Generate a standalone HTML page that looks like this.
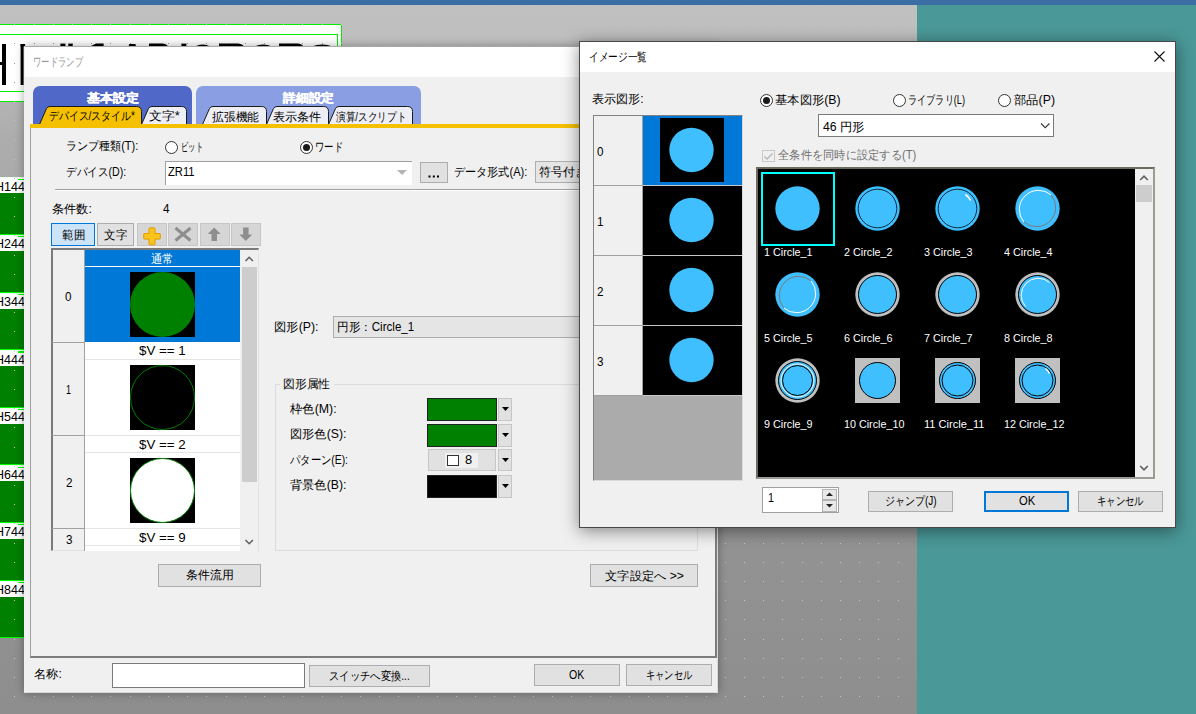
<!DOCTYPE html>
<html><head><meta charset="utf-8">
<style>
html,body{margin:0;padding:0}
body{width:1196px;height:714px;overflow:hidden;position:relative;font-family:"Liberation Sans",sans-serif;font-size:12px;color:#000;background:#8e8e8e}
.a{position:absolute;box-sizing:border-box}
.t{position:absolute;white-space:nowrap;transform-origin:0 50%}
svg{position:absolute;overflow:visible}
</style></head><body>

<div class="a" style="left:0px;top:0px;width:1196px;height:5px;background:#3b6ea5"></div>
<div class="a" style="left:0px;top:5px;width:917px;height:709px;background:linear-gradient(#c0c0c0 0px,#bebebe 40px,#adadad 130px,#939393 520px,#8e8e8e 709px)"></div>
<div class="a" style="left:917px;top:5px;width:279px;height:709px;background:#4a9898"></div>
<div class="a" style="left:-10px;top:24px;width:352px;height:78px;background:#fff;border:1px solid #00f000"></div>
<div class="a" style="left:-10px;top:34px;width:348px;height:58px;border:1px solid #00f000"></div>
<svg style="left:0;top:0" width="345" height="100">
<rect x="2" y="44" width="4" height="41" fill="#000"/><rect x="0" y="62" width="3" height="3" fill="#000"/>
<rect x="20.6" y="44" width="3" height="41" fill="#000"/><rect x="20.6" y="44" width="4.5" height="2.5" fill="#000"/>
<rect x="60.4" y="43.6" width="5" height="3" fill="#000"/><rect x="68.3" y="43.6" width="4.4" height="3" fill="#000"/>
<path d="M90,46.5 L96,43.6 L103.6,43.6 L103.6,46.5 Z" fill="#000"/>
<rect x="128.8" y="44" width="7" height="2.6" rx="1" fill="#000"/>
<path d="M149,46.5 L149,43.6 L163,43.6 Q167.6,44.5 167.6,46.5 Z" fill="#000"/>
<rect x="181.4" y="43.6" width="5" height="3" fill="#000"/>
<path d="M195,46.5 Q202.7,42.5 210.4,46.5 Z M219,46.5 L219,43.6 L238,43.6 Q243.6,44.5 243.6,46.5 Z M254.5,46.5 Q263.2,42.5 271.9,46.5 Z M279,46.5 L279,43.6 L298,43.6 Q303,44.5 303,46.5 Z M311.7,46.5 Q322,42.5 332.6,46.5 Z" fill="#000"/>
</svg>
<div class="a" style="left:0px;top:177.4px;width:24px;height:57.6px;background:#008000;border-bottom:1px solid #00ff00"></div>
<div class="a" style="left:0px;top:177.4px;width:24px;height:16px;background:#fff;border-top:1px solid #e8ffe8"></div>
<div class="a" style="left:18px;top:178.6px;width:6px;height:1.3px;background:#00ff00"></div>
<div class="t" style="left:-5px;top:179.8px;font-size:12.5px;line-height:14px;">H144</div>
<div class="a" style="left:0px;top:235.0px;width:24px;height:57.6px;background:#008000;border-bottom:1px solid #00ff00"></div>
<div class="a" style="left:0px;top:235.0px;width:24px;height:16px;background:#fff;border-top:1px solid #e8ffe8"></div>
<div class="a" style="left:18px;top:236.2px;width:6px;height:1.3px;background:#00ff00"></div>
<div class="t" style="left:-5px;top:237.4px;font-size:12.5px;line-height:14px;">H244</div>
<div class="a" style="left:0px;top:292.6px;width:24px;height:57.6px;background:#008000;border-bottom:1px solid #00ff00"></div>
<div class="a" style="left:0px;top:292.6px;width:24px;height:16px;background:#fff;border-top:1px solid #e8ffe8"></div>
<div class="a" style="left:18px;top:293.8px;width:6px;height:1.3px;background:#00ff00"></div>
<div class="t" style="left:-5px;top:295.0px;font-size:12.5px;line-height:14px;">H344</div>
<div class="a" style="left:0px;top:350.2px;width:24px;height:57.6px;background:#008000;border-bottom:1px solid #00ff00"></div>
<div class="a" style="left:0px;top:350.2px;width:24px;height:16px;background:#fff;border-top:1px solid #e8ffe8"></div>
<div class="a" style="left:18px;top:351.4px;width:6px;height:1.3px;background:#00ff00"></div>
<div class="t" style="left:-5px;top:352.6px;font-size:12.5px;line-height:14px;">H444</div>
<div class="a" style="left:0px;top:407.8px;width:24px;height:57.6px;background:#008000;border-bottom:1px solid #00ff00"></div>
<div class="a" style="left:0px;top:407.8px;width:24px;height:16px;background:#fff;border-top:1px solid #e8ffe8"></div>
<div class="a" style="left:18px;top:409.0px;width:6px;height:1.3px;background:#00ff00"></div>
<div class="t" style="left:-5px;top:410.2px;font-size:12.5px;line-height:14px;">H544</div>
<div class="a" style="left:0px;top:465.4px;width:24px;height:57.6px;background:#008000;border-bottom:1px solid #00ff00"></div>
<div class="a" style="left:0px;top:465.4px;width:24px;height:16px;background:#fff;border-top:1px solid #e8ffe8"></div>
<div class="a" style="left:18px;top:466.6px;width:6px;height:1.3px;background:#00ff00"></div>
<div class="t" style="left:-5px;top:467.8px;font-size:12.5px;line-height:14px;">H644</div>
<div class="a" style="left:0px;top:523.0px;width:24px;height:57.6px;background:#008000;border-bottom:1px solid #00ff00"></div>
<div class="a" style="left:0px;top:523.0px;width:24px;height:16px;background:#fff;border-top:1px solid #e8ffe8"></div>
<div class="a" style="left:18px;top:524.2px;width:6px;height:1.3px;background:#00ff00"></div>
<div class="t" style="left:-5px;top:525.4px;font-size:12.5px;line-height:14px;">H744</div>
<div class="a" style="left:0px;top:580.6px;width:24px;height:57.6px;background:#008000;border-bottom:1px solid #00ff00"></div>
<div class="a" style="left:0px;top:580.6px;width:24px;height:16px;background:#fff;border-top:1px solid #e8ffe8"></div>
<div class="a" style="left:18px;top:581.8px;width:6px;height:1.3px;background:#00ff00"></div>
<div class="t" style="left:-5px;top:583.0px;font-size:12.5px;line-height:14px;">H844</div>
<svg style="left:0;top:0" width="917" height="714"><path d="M14,5h1v1h-1zM34,5h1v1h-1zM53,5h1v1h-1zM72,5h1v1h-1zM91,5h1v1h-1zM110,5h1v1h-1zM130,5h1v1h-1zM149,5h1v1h-1zM168,5h1v1h-1zM187,5h1v1h-1zM206,5h1v1h-1zM226,5h1v1h-1zM245,5h1v1h-1zM264,5h1v1h-1zM283,5h1v1h-1zM302,5h1v1h-1zM322,5h1v1h-1zM341,5h1v1h-1zM360,5h1v1h-1zM379,5h1v1h-1zM398,5h1v1h-1zM418,5h1v1h-1zM437,5h1v1h-1zM456,5h1v1h-1zM475,5h1v1h-1zM494,5h1v1h-1zM514,5h1v1h-1zM533,5h1v1h-1zM552,5h1v1h-1zM571,5h1v1h-1zM590,5h1v1h-1zM610,5h1v1h-1zM629,5h1v1h-1zM648,5h1v1h-1zM667,5h1v1h-1zM686,5h1v1h-1zM706,5h1v1h-1zM725,5h1v1h-1zM744,5h1v1h-1zM763,5h1v1h-1zM782,5h1v1h-1zM802,5h1v1h-1zM821,5h1v1h-1zM840,5h1v1h-1zM859,5h1v1h-1zM878,5h1v1h-1zM898,5h1v1h-1zM14,24h1v1h-1zM34,24h1v1h-1zM53,24h1v1h-1zM72,24h1v1h-1zM91,24h1v1h-1zM110,24h1v1h-1zM130,24h1v1h-1zM149,24h1v1h-1zM168,24h1v1h-1zM187,24h1v1h-1zM206,24h1v1h-1zM226,24h1v1h-1zM245,24h1v1h-1zM264,24h1v1h-1zM283,24h1v1h-1zM302,24h1v1h-1zM322,24h1v1h-1zM341,24h1v1h-1zM360,24h1v1h-1zM379,24h1v1h-1zM398,24h1v1h-1zM418,24h1v1h-1zM437,24h1v1h-1zM456,24h1v1h-1zM475,24h1v1h-1zM494,24h1v1h-1zM514,24h1v1h-1zM533,24h1v1h-1zM552,24h1v1h-1zM571,24h1v1h-1zM590,24h1v1h-1zM610,24h1v1h-1zM629,24h1v1h-1zM648,24h1v1h-1zM667,24h1v1h-1zM686,24h1v1h-1zM706,24h1v1h-1zM725,24h1v1h-1zM744,24h1v1h-1zM763,24h1v1h-1zM782,24h1v1h-1zM802,24h1v1h-1zM821,24h1v1h-1zM840,24h1v1h-1zM859,24h1v1h-1zM878,24h1v1h-1zM898,24h1v1h-1zM341,43h1v1h-1zM360,43h1v1h-1zM379,43h1v1h-1zM398,43h1v1h-1zM418,43h1v1h-1zM437,43h1v1h-1zM456,43h1v1h-1zM475,43h1v1h-1zM494,43h1v1h-1zM514,43h1v1h-1zM533,43h1v1h-1zM552,43h1v1h-1zM571,43h1v1h-1zM590,43h1v1h-1zM610,43h1v1h-1zM629,43h1v1h-1zM648,43h1v1h-1zM667,43h1v1h-1zM686,43h1v1h-1zM706,43h1v1h-1zM725,43h1v1h-1zM744,43h1v1h-1zM763,43h1v1h-1zM782,43h1v1h-1zM802,43h1v1h-1zM821,43h1v1h-1zM840,43h1v1h-1zM859,43h1v1h-1zM878,43h1v1h-1zM898,43h1v1h-1zM341,63h1v1h-1zM360,63h1v1h-1zM379,63h1v1h-1zM398,63h1v1h-1zM418,63h1v1h-1zM437,63h1v1h-1zM456,63h1v1h-1zM475,63h1v1h-1zM494,63h1v1h-1zM514,63h1v1h-1zM533,63h1v1h-1zM552,63h1v1h-1zM571,63h1v1h-1zM590,63h1v1h-1zM610,63h1v1h-1zM629,63h1v1h-1zM648,63h1v1h-1zM667,63h1v1h-1zM686,63h1v1h-1zM706,63h1v1h-1zM725,63h1v1h-1zM744,63h1v1h-1zM763,63h1v1h-1zM782,63h1v1h-1zM802,63h1v1h-1zM821,63h1v1h-1zM840,63h1v1h-1zM859,63h1v1h-1zM878,63h1v1h-1zM898,63h1v1h-1zM341,82h1v1h-1zM360,82h1v1h-1zM379,82h1v1h-1zM398,82h1v1h-1zM418,82h1v1h-1zM437,82h1v1h-1zM456,82h1v1h-1zM475,82h1v1h-1zM494,82h1v1h-1zM514,82h1v1h-1zM533,82h1v1h-1zM552,82h1v1h-1zM571,82h1v1h-1zM590,82h1v1h-1zM610,82h1v1h-1zM629,82h1v1h-1zM648,82h1v1h-1zM667,82h1v1h-1zM686,82h1v1h-1zM706,82h1v1h-1zM725,82h1v1h-1zM744,82h1v1h-1zM763,82h1v1h-1zM782,82h1v1h-1zM802,82h1v1h-1zM821,82h1v1h-1zM840,82h1v1h-1zM859,82h1v1h-1zM878,82h1v1h-1zM898,82h1v1h-1zM14,101h1v1h-1zM34,101h1v1h-1zM53,101h1v1h-1zM72,101h1v1h-1zM91,101h1v1h-1zM110,101h1v1h-1zM130,101h1v1h-1zM149,101h1v1h-1zM168,101h1v1h-1zM187,101h1v1h-1zM206,101h1v1h-1zM226,101h1v1h-1zM245,101h1v1h-1zM264,101h1v1h-1zM283,101h1v1h-1zM302,101h1v1h-1zM322,101h1v1h-1zM341,101h1v1h-1zM360,101h1v1h-1zM379,101h1v1h-1zM398,101h1v1h-1zM418,101h1v1h-1zM437,101h1v1h-1zM456,101h1v1h-1zM475,101h1v1h-1zM494,101h1v1h-1zM514,101h1v1h-1zM533,101h1v1h-1zM552,101h1v1h-1zM571,101h1v1h-1zM590,101h1v1h-1zM610,101h1v1h-1zM629,101h1v1h-1zM648,101h1v1h-1zM667,101h1v1h-1zM686,101h1v1h-1zM706,101h1v1h-1zM725,101h1v1h-1zM744,101h1v1h-1zM763,101h1v1h-1zM782,101h1v1h-1zM802,101h1v1h-1zM821,101h1v1h-1zM840,101h1v1h-1zM859,101h1v1h-1zM878,101h1v1h-1zM898,101h1v1h-1zM14,120h1v1h-1zM34,120h1v1h-1zM53,120h1v1h-1zM72,120h1v1h-1zM91,120h1v1h-1zM110,120h1v1h-1zM130,120h1v1h-1zM149,120h1v1h-1zM168,120h1v1h-1zM187,120h1v1h-1zM206,120h1v1h-1zM226,120h1v1h-1zM245,120h1v1h-1zM264,120h1v1h-1zM283,120h1v1h-1zM302,120h1v1h-1zM322,120h1v1h-1zM341,120h1v1h-1zM360,120h1v1h-1zM379,120h1v1h-1zM398,120h1v1h-1zM418,120h1v1h-1zM437,120h1v1h-1zM456,120h1v1h-1zM475,120h1v1h-1zM494,120h1v1h-1zM514,120h1v1h-1zM533,120h1v1h-1zM552,120h1v1h-1zM571,120h1v1h-1zM590,120h1v1h-1zM610,120h1v1h-1zM629,120h1v1h-1zM648,120h1v1h-1zM667,120h1v1h-1zM686,120h1v1h-1zM706,120h1v1h-1zM725,120h1v1h-1zM744,120h1v1h-1zM763,120h1v1h-1zM782,120h1v1h-1zM802,120h1v1h-1zM821,120h1v1h-1zM840,120h1v1h-1zM859,120h1v1h-1zM878,120h1v1h-1zM898,120h1v1h-1zM14,139h1v1h-1zM34,139h1v1h-1zM53,139h1v1h-1zM72,139h1v1h-1zM91,139h1v1h-1zM110,139h1v1h-1zM130,139h1v1h-1zM149,139h1v1h-1zM168,139h1v1h-1zM187,139h1v1h-1zM206,139h1v1h-1zM226,139h1v1h-1zM245,139h1v1h-1zM264,139h1v1h-1zM283,139h1v1h-1zM302,139h1v1h-1zM322,139h1v1h-1zM341,139h1v1h-1zM360,139h1v1h-1zM379,139h1v1h-1zM398,139h1v1h-1zM418,139h1v1h-1zM437,139h1v1h-1zM456,139h1v1h-1zM475,139h1v1h-1zM494,139h1v1h-1zM514,139h1v1h-1zM533,139h1v1h-1zM552,139h1v1h-1zM571,139h1v1h-1zM590,139h1v1h-1zM610,139h1v1h-1zM629,139h1v1h-1zM648,139h1v1h-1zM667,139h1v1h-1zM686,139h1v1h-1zM706,139h1v1h-1zM725,139h1v1h-1zM744,139h1v1h-1zM763,139h1v1h-1zM782,139h1v1h-1zM802,139h1v1h-1zM821,139h1v1h-1zM840,139h1v1h-1zM859,139h1v1h-1zM878,139h1v1h-1zM898,139h1v1h-1zM14,159h1v1h-1zM34,159h1v1h-1zM53,159h1v1h-1zM72,159h1v1h-1zM91,159h1v1h-1zM110,159h1v1h-1zM130,159h1v1h-1zM149,159h1v1h-1zM168,159h1v1h-1zM187,159h1v1h-1zM206,159h1v1h-1zM226,159h1v1h-1zM245,159h1v1h-1zM264,159h1v1h-1zM283,159h1v1h-1zM302,159h1v1h-1zM322,159h1v1h-1zM341,159h1v1h-1zM360,159h1v1h-1zM379,159h1v1h-1zM398,159h1v1h-1zM418,159h1v1h-1zM437,159h1v1h-1zM456,159h1v1h-1zM475,159h1v1h-1zM494,159h1v1h-1zM514,159h1v1h-1zM533,159h1v1h-1zM552,159h1v1h-1zM571,159h1v1h-1zM590,159h1v1h-1zM610,159h1v1h-1zM629,159h1v1h-1zM648,159h1v1h-1zM667,159h1v1h-1zM686,159h1v1h-1zM706,159h1v1h-1zM725,159h1v1h-1zM744,159h1v1h-1zM763,159h1v1h-1zM782,159h1v1h-1zM802,159h1v1h-1zM821,159h1v1h-1zM840,159h1v1h-1zM859,159h1v1h-1zM878,159h1v1h-1zM898,159h1v1h-1zM14,178h1v1h-1zM34,178h1v1h-1zM53,178h1v1h-1zM72,178h1v1h-1zM91,178h1v1h-1zM110,178h1v1h-1zM130,178h1v1h-1zM149,178h1v1h-1zM168,178h1v1h-1zM187,178h1v1h-1zM206,178h1v1h-1zM226,178h1v1h-1zM245,178h1v1h-1zM264,178h1v1h-1zM283,178h1v1h-1zM302,178h1v1h-1zM322,178h1v1h-1zM341,178h1v1h-1zM360,178h1v1h-1zM379,178h1v1h-1zM398,178h1v1h-1zM418,178h1v1h-1zM437,178h1v1h-1zM456,178h1v1h-1zM475,178h1v1h-1zM494,178h1v1h-1zM514,178h1v1h-1zM533,178h1v1h-1zM552,178h1v1h-1zM571,178h1v1h-1zM590,178h1v1h-1zM610,178h1v1h-1zM629,178h1v1h-1zM648,178h1v1h-1zM667,178h1v1h-1zM686,178h1v1h-1zM706,178h1v1h-1zM725,178h1v1h-1zM744,178h1v1h-1zM763,178h1v1h-1zM782,178h1v1h-1zM802,178h1v1h-1zM821,178h1v1h-1zM840,178h1v1h-1zM859,178h1v1h-1zM878,178h1v1h-1zM898,178h1v1h-1zM14,197h1v1h-1zM34,197h1v1h-1zM53,197h1v1h-1zM72,197h1v1h-1zM91,197h1v1h-1zM110,197h1v1h-1zM130,197h1v1h-1zM149,197h1v1h-1zM168,197h1v1h-1zM187,197h1v1h-1zM206,197h1v1h-1zM226,197h1v1h-1zM245,197h1v1h-1zM264,197h1v1h-1zM283,197h1v1h-1zM302,197h1v1h-1zM322,197h1v1h-1zM341,197h1v1h-1zM360,197h1v1h-1zM379,197h1v1h-1zM398,197h1v1h-1zM418,197h1v1h-1zM437,197h1v1h-1zM456,197h1v1h-1zM475,197h1v1h-1zM494,197h1v1h-1zM514,197h1v1h-1zM533,197h1v1h-1zM552,197h1v1h-1zM571,197h1v1h-1zM590,197h1v1h-1zM610,197h1v1h-1zM629,197h1v1h-1zM648,197h1v1h-1zM667,197h1v1h-1zM686,197h1v1h-1zM706,197h1v1h-1zM725,197h1v1h-1zM744,197h1v1h-1zM763,197h1v1h-1zM782,197h1v1h-1zM802,197h1v1h-1zM821,197h1v1h-1zM840,197h1v1h-1zM859,197h1v1h-1zM878,197h1v1h-1zM898,197h1v1h-1zM14,216h1v1h-1zM34,216h1v1h-1zM53,216h1v1h-1zM72,216h1v1h-1zM91,216h1v1h-1zM110,216h1v1h-1zM130,216h1v1h-1zM149,216h1v1h-1zM168,216h1v1h-1zM187,216h1v1h-1zM206,216h1v1h-1zM226,216h1v1h-1zM245,216h1v1h-1zM264,216h1v1h-1zM283,216h1v1h-1zM302,216h1v1h-1zM322,216h1v1h-1zM341,216h1v1h-1zM360,216h1v1h-1zM379,216h1v1h-1zM398,216h1v1h-1zM418,216h1v1h-1zM437,216h1v1h-1zM456,216h1v1h-1zM475,216h1v1h-1zM494,216h1v1h-1zM514,216h1v1h-1zM533,216h1v1h-1zM552,216h1v1h-1zM571,216h1v1h-1zM590,216h1v1h-1zM610,216h1v1h-1zM629,216h1v1h-1zM648,216h1v1h-1zM667,216h1v1h-1zM686,216h1v1h-1zM706,216h1v1h-1zM725,216h1v1h-1zM744,216h1v1h-1zM763,216h1v1h-1zM782,216h1v1h-1zM802,216h1v1h-1zM821,216h1v1h-1zM840,216h1v1h-1zM859,216h1v1h-1zM878,216h1v1h-1zM898,216h1v1h-1zM14,235h1v1h-1zM34,235h1v1h-1zM53,235h1v1h-1zM72,235h1v1h-1zM91,235h1v1h-1zM110,235h1v1h-1zM130,235h1v1h-1zM149,235h1v1h-1zM168,235h1v1h-1zM187,235h1v1h-1zM206,235h1v1h-1zM226,235h1v1h-1zM245,235h1v1h-1zM264,235h1v1h-1zM283,235h1v1h-1zM302,235h1v1h-1zM322,235h1v1h-1zM341,235h1v1h-1zM360,235h1v1h-1zM379,235h1v1h-1zM398,235h1v1h-1zM418,235h1v1h-1zM437,235h1v1h-1zM456,235h1v1h-1zM475,235h1v1h-1zM494,235h1v1h-1zM514,235h1v1h-1zM533,235h1v1h-1zM552,235h1v1h-1zM571,235h1v1h-1zM590,235h1v1h-1zM610,235h1v1h-1zM629,235h1v1h-1zM648,235h1v1h-1zM667,235h1v1h-1zM686,235h1v1h-1zM706,235h1v1h-1zM725,235h1v1h-1zM744,235h1v1h-1zM763,235h1v1h-1zM782,235h1v1h-1zM802,235h1v1h-1zM821,235h1v1h-1zM840,235h1v1h-1zM859,235h1v1h-1zM878,235h1v1h-1zM898,235h1v1h-1zM14,255h1v1h-1zM34,255h1v1h-1zM53,255h1v1h-1zM72,255h1v1h-1zM91,255h1v1h-1zM110,255h1v1h-1zM130,255h1v1h-1zM149,255h1v1h-1zM168,255h1v1h-1zM187,255h1v1h-1zM206,255h1v1h-1zM226,255h1v1h-1zM245,255h1v1h-1zM264,255h1v1h-1zM283,255h1v1h-1zM302,255h1v1h-1zM322,255h1v1h-1zM341,255h1v1h-1zM360,255h1v1h-1zM379,255h1v1h-1zM398,255h1v1h-1zM418,255h1v1h-1zM437,255h1v1h-1zM456,255h1v1h-1zM475,255h1v1h-1zM494,255h1v1h-1zM514,255h1v1h-1zM533,255h1v1h-1zM552,255h1v1h-1zM571,255h1v1h-1zM590,255h1v1h-1zM610,255h1v1h-1zM629,255h1v1h-1zM648,255h1v1h-1zM667,255h1v1h-1zM686,255h1v1h-1zM706,255h1v1h-1zM725,255h1v1h-1zM744,255h1v1h-1zM763,255h1v1h-1zM782,255h1v1h-1zM802,255h1v1h-1zM821,255h1v1h-1zM840,255h1v1h-1zM859,255h1v1h-1zM878,255h1v1h-1zM898,255h1v1h-1zM14,274h1v1h-1zM34,274h1v1h-1zM53,274h1v1h-1zM72,274h1v1h-1zM91,274h1v1h-1zM110,274h1v1h-1zM130,274h1v1h-1zM149,274h1v1h-1zM168,274h1v1h-1zM187,274h1v1h-1zM206,274h1v1h-1zM226,274h1v1h-1zM245,274h1v1h-1zM264,274h1v1h-1zM283,274h1v1h-1zM302,274h1v1h-1zM322,274h1v1h-1zM341,274h1v1h-1zM360,274h1v1h-1zM379,274h1v1h-1zM398,274h1v1h-1zM418,274h1v1h-1zM437,274h1v1h-1zM456,274h1v1h-1zM475,274h1v1h-1zM494,274h1v1h-1zM514,274h1v1h-1zM533,274h1v1h-1zM552,274h1v1h-1zM571,274h1v1h-1zM590,274h1v1h-1zM610,274h1v1h-1zM629,274h1v1h-1zM648,274h1v1h-1zM667,274h1v1h-1zM686,274h1v1h-1zM706,274h1v1h-1zM725,274h1v1h-1zM744,274h1v1h-1zM763,274h1v1h-1zM782,274h1v1h-1zM802,274h1v1h-1zM821,274h1v1h-1zM840,274h1v1h-1zM859,274h1v1h-1zM878,274h1v1h-1zM898,274h1v1h-1zM14,293h1v1h-1zM34,293h1v1h-1zM53,293h1v1h-1zM72,293h1v1h-1zM91,293h1v1h-1zM110,293h1v1h-1zM130,293h1v1h-1zM149,293h1v1h-1zM168,293h1v1h-1zM187,293h1v1h-1zM206,293h1v1h-1zM226,293h1v1h-1zM245,293h1v1h-1zM264,293h1v1h-1zM283,293h1v1h-1zM302,293h1v1h-1zM322,293h1v1h-1zM341,293h1v1h-1zM360,293h1v1h-1zM379,293h1v1h-1zM398,293h1v1h-1zM418,293h1v1h-1zM437,293h1v1h-1zM456,293h1v1h-1zM475,293h1v1h-1zM494,293h1v1h-1zM514,293h1v1h-1zM533,293h1v1h-1zM552,293h1v1h-1zM571,293h1v1h-1zM590,293h1v1h-1zM610,293h1v1h-1zM629,293h1v1h-1zM648,293h1v1h-1zM667,293h1v1h-1zM686,293h1v1h-1zM706,293h1v1h-1zM725,293h1v1h-1zM744,293h1v1h-1zM763,293h1v1h-1zM782,293h1v1h-1zM802,293h1v1h-1zM821,293h1v1h-1zM840,293h1v1h-1zM859,293h1v1h-1zM878,293h1v1h-1zM898,293h1v1h-1zM14,312h1v1h-1zM34,312h1v1h-1zM53,312h1v1h-1zM72,312h1v1h-1zM91,312h1v1h-1zM110,312h1v1h-1zM130,312h1v1h-1zM149,312h1v1h-1zM168,312h1v1h-1zM187,312h1v1h-1zM206,312h1v1h-1zM226,312h1v1h-1zM245,312h1v1h-1zM264,312h1v1h-1zM283,312h1v1h-1zM302,312h1v1h-1zM322,312h1v1h-1zM341,312h1v1h-1zM360,312h1v1h-1zM379,312h1v1h-1zM398,312h1v1h-1zM418,312h1v1h-1zM437,312h1v1h-1zM456,312h1v1h-1zM475,312h1v1h-1zM494,312h1v1h-1zM514,312h1v1h-1zM533,312h1v1h-1zM552,312h1v1h-1zM571,312h1v1h-1zM590,312h1v1h-1zM610,312h1v1h-1zM629,312h1v1h-1zM648,312h1v1h-1zM667,312h1v1h-1zM686,312h1v1h-1zM706,312h1v1h-1zM725,312h1v1h-1zM744,312h1v1h-1zM763,312h1v1h-1zM782,312h1v1h-1zM802,312h1v1h-1zM821,312h1v1h-1zM840,312h1v1h-1zM859,312h1v1h-1zM878,312h1v1h-1zM898,312h1v1h-1zM14,331h1v1h-1zM34,331h1v1h-1zM53,331h1v1h-1zM72,331h1v1h-1zM91,331h1v1h-1zM110,331h1v1h-1zM130,331h1v1h-1zM149,331h1v1h-1zM168,331h1v1h-1zM187,331h1v1h-1zM206,331h1v1h-1zM226,331h1v1h-1zM245,331h1v1h-1zM264,331h1v1h-1zM283,331h1v1h-1zM302,331h1v1h-1zM322,331h1v1h-1zM341,331h1v1h-1zM360,331h1v1h-1zM379,331h1v1h-1zM398,331h1v1h-1zM418,331h1v1h-1zM437,331h1v1h-1zM456,331h1v1h-1zM475,331h1v1h-1zM494,331h1v1h-1zM514,331h1v1h-1zM533,331h1v1h-1zM552,331h1v1h-1zM571,331h1v1h-1zM590,331h1v1h-1zM610,331h1v1h-1zM629,331h1v1h-1zM648,331h1v1h-1zM667,331h1v1h-1zM686,331h1v1h-1zM706,331h1v1h-1zM725,331h1v1h-1zM744,331h1v1h-1zM763,331h1v1h-1zM782,331h1v1h-1zM802,331h1v1h-1zM821,331h1v1h-1zM840,331h1v1h-1zM859,331h1v1h-1zM878,331h1v1h-1zM898,331h1v1h-1zM14,351h1v1h-1zM34,351h1v1h-1zM53,351h1v1h-1zM72,351h1v1h-1zM91,351h1v1h-1zM110,351h1v1h-1zM130,351h1v1h-1zM149,351h1v1h-1zM168,351h1v1h-1zM187,351h1v1h-1zM206,351h1v1h-1zM226,351h1v1h-1zM245,351h1v1h-1zM264,351h1v1h-1zM283,351h1v1h-1zM302,351h1v1h-1zM322,351h1v1h-1zM341,351h1v1h-1zM360,351h1v1h-1zM379,351h1v1h-1zM398,351h1v1h-1zM418,351h1v1h-1zM437,351h1v1h-1zM456,351h1v1h-1zM475,351h1v1h-1zM494,351h1v1h-1zM514,351h1v1h-1zM533,351h1v1h-1zM552,351h1v1h-1zM571,351h1v1h-1zM590,351h1v1h-1zM610,351h1v1h-1zM629,351h1v1h-1zM648,351h1v1h-1zM667,351h1v1h-1zM686,351h1v1h-1zM706,351h1v1h-1zM725,351h1v1h-1zM744,351h1v1h-1zM763,351h1v1h-1zM782,351h1v1h-1zM802,351h1v1h-1zM821,351h1v1h-1zM840,351h1v1h-1zM859,351h1v1h-1zM878,351h1v1h-1zM898,351h1v1h-1zM14,370h1v1h-1zM34,370h1v1h-1zM53,370h1v1h-1zM72,370h1v1h-1zM91,370h1v1h-1zM110,370h1v1h-1zM130,370h1v1h-1zM149,370h1v1h-1zM168,370h1v1h-1zM187,370h1v1h-1zM206,370h1v1h-1zM226,370h1v1h-1zM245,370h1v1h-1zM264,370h1v1h-1zM283,370h1v1h-1zM302,370h1v1h-1zM322,370h1v1h-1zM341,370h1v1h-1zM360,370h1v1h-1zM379,370h1v1h-1zM398,370h1v1h-1zM418,370h1v1h-1zM437,370h1v1h-1zM456,370h1v1h-1zM475,370h1v1h-1zM494,370h1v1h-1zM514,370h1v1h-1zM533,370h1v1h-1zM552,370h1v1h-1zM571,370h1v1h-1zM590,370h1v1h-1zM610,370h1v1h-1zM629,370h1v1h-1zM648,370h1v1h-1zM667,370h1v1h-1zM686,370h1v1h-1zM706,370h1v1h-1zM725,370h1v1h-1zM744,370h1v1h-1zM763,370h1v1h-1zM782,370h1v1h-1zM802,370h1v1h-1zM821,370h1v1h-1zM840,370h1v1h-1zM859,370h1v1h-1zM878,370h1v1h-1zM898,370h1v1h-1zM14,389h1v1h-1zM34,389h1v1h-1zM53,389h1v1h-1zM72,389h1v1h-1zM91,389h1v1h-1zM110,389h1v1h-1zM130,389h1v1h-1zM149,389h1v1h-1zM168,389h1v1h-1zM187,389h1v1h-1zM206,389h1v1h-1zM226,389h1v1h-1zM245,389h1v1h-1zM264,389h1v1h-1zM283,389h1v1h-1zM302,389h1v1h-1zM322,389h1v1h-1zM341,389h1v1h-1zM360,389h1v1h-1zM379,389h1v1h-1zM398,389h1v1h-1zM418,389h1v1h-1zM437,389h1v1h-1zM456,389h1v1h-1zM475,389h1v1h-1zM494,389h1v1h-1zM514,389h1v1h-1zM533,389h1v1h-1zM552,389h1v1h-1zM571,389h1v1h-1zM590,389h1v1h-1zM610,389h1v1h-1zM629,389h1v1h-1zM648,389h1v1h-1zM667,389h1v1h-1zM686,389h1v1h-1zM706,389h1v1h-1zM725,389h1v1h-1zM744,389h1v1h-1zM763,389h1v1h-1zM782,389h1v1h-1zM802,389h1v1h-1zM821,389h1v1h-1zM840,389h1v1h-1zM859,389h1v1h-1zM878,389h1v1h-1zM898,389h1v1h-1zM14,408h1v1h-1zM34,408h1v1h-1zM53,408h1v1h-1zM72,408h1v1h-1zM91,408h1v1h-1zM110,408h1v1h-1zM130,408h1v1h-1zM149,408h1v1h-1zM168,408h1v1h-1zM187,408h1v1h-1zM206,408h1v1h-1zM226,408h1v1h-1zM245,408h1v1h-1zM264,408h1v1h-1zM283,408h1v1h-1zM302,408h1v1h-1zM322,408h1v1h-1zM341,408h1v1h-1zM360,408h1v1h-1zM379,408h1v1h-1zM398,408h1v1h-1zM418,408h1v1h-1zM437,408h1v1h-1zM456,408h1v1h-1zM475,408h1v1h-1zM494,408h1v1h-1zM514,408h1v1h-1zM533,408h1v1h-1zM552,408h1v1h-1zM571,408h1v1h-1zM590,408h1v1h-1zM610,408h1v1h-1zM629,408h1v1h-1zM648,408h1v1h-1zM667,408h1v1h-1zM686,408h1v1h-1zM706,408h1v1h-1zM725,408h1v1h-1zM744,408h1v1h-1zM763,408h1v1h-1zM782,408h1v1h-1zM802,408h1v1h-1zM821,408h1v1h-1zM840,408h1v1h-1zM859,408h1v1h-1zM878,408h1v1h-1zM898,408h1v1h-1zM14,427h1v1h-1zM34,427h1v1h-1zM53,427h1v1h-1zM72,427h1v1h-1zM91,427h1v1h-1zM110,427h1v1h-1zM130,427h1v1h-1zM149,427h1v1h-1zM168,427h1v1h-1zM187,427h1v1h-1zM206,427h1v1h-1zM226,427h1v1h-1zM245,427h1v1h-1zM264,427h1v1h-1zM283,427h1v1h-1zM302,427h1v1h-1zM322,427h1v1h-1zM341,427h1v1h-1zM360,427h1v1h-1zM379,427h1v1h-1zM398,427h1v1h-1zM418,427h1v1h-1zM437,427h1v1h-1zM456,427h1v1h-1zM475,427h1v1h-1zM494,427h1v1h-1zM514,427h1v1h-1zM533,427h1v1h-1zM552,427h1v1h-1zM571,427h1v1h-1zM590,427h1v1h-1zM610,427h1v1h-1zM629,427h1v1h-1zM648,427h1v1h-1zM667,427h1v1h-1zM686,427h1v1h-1zM706,427h1v1h-1zM725,427h1v1h-1zM744,427h1v1h-1zM763,427h1v1h-1zM782,427h1v1h-1zM802,427h1v1h-1zM821,427h1v1h-1zM840,427h1v1h-1zM859,427h1v1h-1zM878,427h1v1h-1zM898,427h1v1h-1zM14,447h1v1h-1zM34,447h1v1h-1zM53,447h1v1h-1zM72,447h1v1h-1zM91,447h1v1h-1zM110,447h1v1h-1zM130,447h1v1h-1zM149,447h1v1h-1zM168,447h1v1h-1zM187,447h1v1h-1zM206,447h1v1h-1zM226,447h1v1h-1zM245,447h1v1h-1zM264,447h1v1h-1zM283,447h1v1h-1zM302,447h1v1h-1zM322,447h1v1h-1zM341,447h1v1h-1zM360,447h1v1h-1zM379,447h1v1h-1zM398,447h1v1h-1zM418,447h1v1h-1zM437,447h1v1h-1zM456,447h1v1h-1zM475,447h1v1h-1zM494,447h1v1h-1zM514,447h1v1h-1zM533,447h1v1h-1zM552,447h1v1h-1zM571,447h1v1h-1zM590,447h1v1h-1zM610,447h1v1h-1zM629,447h1v1h-1zM648,447h1v1h-1zM667,447h1v1h-1zM686,447h1v1h-1zM706,447h1v1h-1zM725,447h1v1h-1zM744,447h1v1h-1zM763,447h1v1h-1zM782,447h1v1h-1zM802,447h1v1h-1zM821,447h1v1h-1zM840,447h1v1h-1zM859,447h1v1h-1zM878,447h1v1h-1zM898,447h1v1h-1zM14,466h1v1h-1zM34,466h1v1h-1zM53,466h1v1h-1zM72,466h1v1h-1zM91,466h1v1h-1zM110,466h1v1h-1zM130,466h1v1h-1zM149,466h1v1h-1zM168,466h1v1h-1zM187,466h1v1h-1zM206,466h1v1h-1zM226,466h1v1h-1zM245,466h1v1h-1zM264,466h1v1h-1zM283,466h1v1h-1zM302,466h1v1h-1zM322,466h1v1h-1zM341,466h1v1h-1zM360,466h1v1h-1zM379,466h1v1h-1zM398,466h1v1h-1zM418,466h1v1h-1zM437,466h1v1h-1zM456,466h1v1h-1zM475,466h1v1h-1zM494,466h1v1h-1zM514,466h1v1h-1zM533,466h1v1h-1zM552,466h1v1h-1zM571,466h1v1h-1zM590,466h1v1h-1zM610,466h1v1h-1zM629,466h1v1h-1zM648,466h1v1h-1zM667,466h1v1h-1zM686,466h1v1h-1zM706,466h1v1h-1zM725,466h1v1h-1zM744,466h1v1h-1zM763,466h1v1h-1zM782,466h1v1h-1zM802,466h1v1h-1zM821,466h1v1h-1zM840,466h1v1h-1zM859,466h1v1h-1zM878,466h1v1h-1zM898,466h1v1h-1zM14,485h1v1h-1zM34,485h1v1h-1zM53,485h1v1h-1zM72,485h1v1h-1zM91,485h1v1h-1zM110,485h1v1h-1zM130,485h1v1h-1zM149,485h1v1h-1zM168,485h1v1h-1zM187,485h1v1h-1zM206,485h1v1h-1zM226,485h1v1h-1zM245,485h1v1h-1zM264,485h1v1h-1zM283,485h1v1h-1zM302,485h1v1h-1zM322,485h1v1h-1zM341,485h1v1h-1zM360,485h1v1h-1zM379,485h1v1h-1zM398,485h1v1h-1zM418,485h1v1h-1zM437,485h1v1h-1zM456,485h1v1h-1zM475,485h1v1h-1zM494,485h1v1h-1zM514,485h1v1h-1zM533,485h1v1h-1zM552,485h1v1h-1zM571,485h1v1h-1zM590,485h1v1h-1zM610,485h1v1h-1zM629,485h1v1h-1zM648,485h1v1h-1zM667,485h1v1h-1zM686,485h1v1h-1zM706,485h1v1h-1zM725,485h1v1h-1zM744,485h1v1h-1zM763,485h1v1h-1zM782,485h1v1h-1zM802,485h1v1h-1zM821,485h1v1h-1zM840,485h1v1h-1zM859,485h1v1h-1zM878,485h1v1h-1zM898,485h1v1h-1zM14,504h1v1h-1zM34,504h1v1h-1zM53,504h1v1h-1zM72,504h1v1h-1zM91,504h1v1h-1zM110,504h1v1h-1zM130,504h1v1h-1zM149,504h1v1h-1zM168,504h1v1h-1zM187,504h1v1h-1zM206,504h1v1h-1zM226,504h1v1h-1zM245,504h1v1h-1zM264,504h1v1h-1zM283,504h1v1h-1zM302,504h1v1h-1zM322,504h1v1h-1zM341,504h1v1h-1zM360,504h1v1h-1zM379,504h1v1h-1zM398,504h1v1h-1zM418,504h1v1h-1zM437,504h1v1h-1zM456,504h1v1h-1zM475,504h1v1h-1zM494,504h1v1h-1zM514,504h1v1h-1zM533,504h1v1h-1zM552,504h1v1h-1zM571,504h1v1h-1zM590,504h1v1h-1zM610,504h1v1h-1zM629,504h1v1h-1zM648,504h1v1h-1zM667,504h1v1h-1zM686,504h1v1h-1zM706,504h1v1h-1zM725,504h1v1h-1zM744,504h1v1h-1zM763,504h1v1h-1zM782,504h1v1h-1zM802,504h1v1h-1zM821,504h1v1h-1zM840,504h1v1h-1zM859,504h1v1h-1zM878,504h1v1h-1zM898,504h1v1h-1zM14,523h1v1h-1zM34,523h1v1h-1zM53,523h1v1h-1zM72,523h1v1h-1zM91,523h1v1h-1zM110,523h1v1h-1zM130,523h1v1h-1zM149,523h1v1h-1zM168,523h1v1h-1zM187,523h1v1h-1zM206,523h1v1h-1zM226,523h1v1h-1zM245,523h1v1h-1zM264,523h1v1h-1zM283,523h1v1h-1zM302,523h1v1h-1zM322,523h1v1h-1zM341,523h1v1h-1zM360,523h1v1h-1zM379,523h1v1h-1zM398,523h1v1h-1zM418,523h1v1h-1zM437,523h1v1h-1zM456,523h1v1h-1zM475,523h1v1h-1zM494,523h1v1h-1zM514,523h1v1h-1zM533,523h1v1h-1zM552,523h1v1h-1zM571,523h1v1h-1zM590,523h1v1h-1zM610,523h1v1h-1zM629,523h1v1h-1zM648,523h1v1h-1zM667,523h1v1h-1zM686,523h1v1h-1zM706,523h1v1h-1zM725,523h1v1h-1zM744,523h1v1h-1zM763,523h1v1h-1zM782,523h1v1h-1zM802,523h1v1h-1zM821,523h1v1h-1zM840,523h1v1h-1zM859,523h1v1h-1zM878,523h1v1h-1zM898,523h1v1h-1zM14,543h1v1h-1zM34,543h1v1h-1zM53,543h1v1h-1zM72,543h1v1h-1zM91,543h1v1h-1zM110,543h1v1h-1zM130,543h1v1h-1zM149,543h1v1h-1zM168,543h1v1h-1zM187,543h1v1h-1zM206,543h1v1h-1zM226,543h1v1h-1zM245,543h1v1h-1zM264,543h1v1h-1zM283,543h1v1h-1zM302,543h1v1h-1zM322,543h1v1h-1zM341,543h1v1h-1zM360,543h1v1h-1zM379,543h1v1h-1zM398,543h1v1h-1zM418,543h1v1h-1zM437,543h1v1h-1zM456,543h1v1h-1zM475,543h1v1h-1zM494,543h1v1h-1zM514,543h1v1h-1zM533,543h1v1h-1zM552,543h1v1h-1zM571,543h1v1h-1zM590,543h1v1h-1zM610,543h1v1h-1zM629,543h1v1h-1zM648,543h1v1h-1zM667,543h1v1h-1zM686,543h1v1h-1zM706,543h1v1h-1zM725,543h1v1h-1zM744,543h1v1h-1zM763,543h1v1h-1zM782,543h1v1h-1zM802,543h1v1h-1zM821,543h1v1h-1zM840,543h1v1h-1zM859,543h1v1h-1zM878,543h1v1h-1zM898,543h1v1h-1zM14,562h1v1h-1zM34,562h1v1h-1zM53,562h1v1h-1zM72,562h1v1h-1zM91,562h1v1h-1zM110,562h1v1h-1zM130,562h1v1h-1zM149,562h1v1h-1zM168,562h1v1h-1zM187,562h1v1h-1zM206,562h1v1h-1zM226,562h1v1h-1zM245,562h1v1h-1zM264,562h1v1h-1zM283,562h1v1h-1zM302,562h1v1h-1zM322,562h1v1h-1zM341,562h1v1h-1zM360,562h1v1h-1zM379,562h1v1h-1zM398,562h1v1h-1zM418,562h1v1h-1zM437,562h1v1h-1zM456,562h1v1h-1zM475,562h1v1h-1zM494,562h1v1h-1zM514,562h1v1h-1zM533,562h1v1h-1zM552,562h1v1h-1zM571,562h1v1h-1zM590,562h1v1h-1zM610,562h1v1h-1zM629,562h1v1h-1zM648,562h1v1h-1zM667,562h1v1h-1zM686,562h1v1h-1zM706,562h1v1h-1zM725,562h1v1h-1zM744,562h1v1h-1zM763,562h1v1h-1zM782,562h1v1h-1zM802,562h1v1h-1zM821,562h1v1h-1zM840,562h1v1h-1zM859,562h1v1h-1zM878,562h1v1h-1zM898,562h1v1h-1zM14,581h1v1h-1zM34,581h1v1h-1zM53,581h1v1h-1zM72,581h1v1h-1zM91,581h1v1h-1zM110,581h1v1h-1zM130,581h1v1h-1zM149,581h1v1h-1zM168,581h1v1h-1zM187,581h1v1h-1zM206,581h1v1h-1zM226,581h1v1h-1zM245,581h1v1h-1zM264,581h1v1h-1zM283,581h1v1h-1zM302,581h1v1h-1zM322,581h1v1h-1zM341,581h1v1h-1zM360,581h1v1h-1zM379,581h1v1h-1zM398,581h1v1h-1zM418,581h1v1h-1zM437,581h1v1h-1zM456,581h1v1h-1zM475,581h1v1h-1zM494,581h1v1h-1zM514,581h1v1h-1zM533,581h1v1h-1zM552,581h1v1h-1zM571,581h1v1h-1zM590,581h1v1h-1zM610,581h1v1h-1zM629,581h1v1h-1zM648,581h1v1h-1zM667,581h1v1h-1zM686,581h1v1h-1zM706,581h1v1h-1zM725,581h1v1h-1zM744,581h1v1h-1zM763,581h1v1h-1zM782,581h1v1h-1zM802,581h1v1h-1zM821,581h1v1h-1zM840,581h1v1h-1zM859,581h1v1h-1zM878,581h1v1h-1zM898,581h1v1h-1zM14,600h1v1h-1zM34,600h1v1h-1zM53,600h1v1h-1zM72,600h1v1h-1zM91,600h1v1h-1zM110,600h1v1h-1zM130,600h1v1h-1zM149,600h1v1h-1zM168,600h1v1h-1zM187,600h1v1h-1zM206,600h1v1h-1zM226,600h1v1h-1zM245,600h1v1h-1zM264,600h1v1h-1zM283,600h1v1h-1zM302,600h1v1h-1zM322,600h1v1h-1zM341,600h1v1h-1zM360,600h1v1h-1zM379,600h1v1h-1zM398,600h1v1h-1zM418,600h1v1h-1zM437,600h1v1h-1zM456,600h1v1h-1zM475,600h1v1h-1zM494,600h1v1h-1zM514,600h1v1h-1zM533,600h1v1h-1zM552,600h1v1h-1zM571,600h1v1h-1zM590,600h1v1h-1zM610,600h1v1h-1zM629,600h1v1h-1zM648,600h1v1h-1zM667,600h1v1h-1zM686,600h1v1h-1zM706,600h1v1h-1zM725,600h1v1h-1zM744,600h1v1h-1zM763,600h1v1h-1zM782,600h1v1h-1zM802,600h1v1h-1zM821,600h1v1h-1zM840,600h1v1h-1zM859,600h1v1h-1zM878,600h1v1h-1zM898,600h1v1h-1zM14,619h1v1h-1zM34,619h1v1h-1zM53,619h1v1h-1zM72,619h1v1h-1zM91,619h1v1h-1zM110,619h1v1h-1zM130,619h1v1h-1zM149,619h1v1h-1zM168,619h1v1h-1zM187,619h1v1h-1zM206,619h1v1h-1zM226,619h1v1h-1zM245,619h1v1h-1zM264,619h1v1h-1zM283,619h1v1h-1zM302,619h1v1h-1zM322,619h1v1h-1zM341,619h1v1h-1zM360,619h1v1h-1zM379,619h1v1h-1zM398,619h1v1h-1zM418,619h1v1h-1zM437,619h1v1h-1zM456,619h1v1h-1zM475,619h1v1h-1zM494,619h1v1h-1zM514,619h1v1h-1zM533,619h1v1h-1zM552,619h1v1h-1zM571,619h1v1h-1zM590,619h1v1h-1zM610,619h1v1h-1zM629,619h1v1h-1zM648,619h1v1h-1zM667,619h1v1h-1zM686,619h1v1h-1zM706,619h1v1h-1zM725,619h1v1h-1zM744,619h1v1h-1zM763,619h1v1h-1zM782,619h1v1h-1zM802,619h1v1h-1zM821,619h1v1h-1zM840,619h1v1h-1zM859,619h1v1h-1zM878,619h1v1h-1zM898,619h1v1h-1zM14,639h1v1h-1zM34,639h1v1h-1zM53,639h1v1h-1zM72,639h1v1h-1zM91,639h1v1h-1zM110,639h1v1h-1zM130,639h1v1h-1zM149,639h1v1h-1zM168,639h1v1h-1zM187,639h1v1h-1zM206,639h1v1h-1zM226,639h1v1h-1zM245,639h1v1h-1zM264,639h1v1h-1zM283,639h1v1h-1zM302,639h1v1h-1zM322,639h1v1h-1zM341,639h1v1h-1zM360,639h1v1h-1zM379,639h1v1h-1zM398,639h1v1h-1zM418,639h1v1h-1zM437,639h1v1h-1zM456,639h1v1h-1zM475,639h1v1h-1zM494,639h1v1h-1zM514,639h1v1h-1zM533,639h1v1h-1zM552,639h1v1h-1zM571,639h1v1h-1zM590,639h1v1h-1zM610,639h1v1h-1zM629,639h1v1h-1zM648,639h1v1h-1zM667,639h1v1h-1zM686,639h1v1h-1zM706,639h1v1h-1zM725,639h1v1h-1zM744,639h1v1h-1zM763,639h1v1h-1zM782,639h1v1h-1zM802,639h1v1h-1zM821,639h1v1h-1zM840,639h1v1h-1zM859,639h1v1h-1zM878,639h1v1h-1zM898,639h1v1h-1zM14,658h1v1h-1zM34,658h1v1h-1zM53,658h1v1h-1zM72,658h1v1h-1zM91,658h1v1h-1zM110,658h1v1h-1zM130,658h1v1h-1zM149,658h1v1h-1zM168,658h1v1h-1zM187,658h1v1h-1zM206,658h1v1h-1zM226,658h1v1h-1zM245,658h1v1h-1zM264,658h1v1h-1zM283,658h1v1h-1zM302,658h1v1h-1zM322,658h1v1h-1zM341,658h1v1h-1zM360,658h1v1h-1zM379,658h1v1h-1zM398,658h1v1h-1zM418,658h1v1h-1zM437,658h1v1h-1zM456,658h1v1h-1zM475,658h1v1h-1zM494,658h1v1h-1zM514,658h1v1h-1zM533,658h1v1h-1zM552,658h1v1h-1zM571,658h1v1h-1zM590,658h1v1h-1zM610,658h1v1h-1zM629,658h1v1h-1zM648,658h1v1h-1zM667,658h1v1h-1zM686,658h1v1h-1zM706,658h1v1h-1zM725,658h1v1h-1zM744,658h1v1h-1zM763,658h1v1h-1zM782,658h1v1h-1zM802,658h1v1h-1zM821,658h1v1h-1zM840,658h1v1h-1zM859,658h1v1h-1zM878,658h1v1h-1zM898,658h1v1h-1zM14,677h1v1h-1zM34,677h1v1h-1zM53,677h1v1h-1zM72,677h1v1h-1zM91,677h1v1h-1zM110,677h1v1h-1zM130,677h1v1h-1zM149,677h1v1h-1zM168,677h1v1h-1zM187,677h1v1h-1zM206,677h1v1h-1zM226,677h1v1h-1zM245,677h1v1h-1zM264,677h1v1h-1zM283,677h1v1h-1zM302,677h1v1h-1zM322,677h1v1h-1zM341,677h1v1h-1zM360,677h1v1h-1zM379,677h1v1h-1zM398,677h1v1h-1zM418,677h1v1h-1zM437,677h1v1h-1zM456,677h1v1h-1zM475,677h1v1h-1zM494,677h1v1h-1zM514,677h1v1h-1zM533,677h1v1h-1zM552,677h1v1h-1zM571,677h1v1h-1zM590,677h1v1h-1zM610,677h1v1h-1zM629,677h1v1h-1zM648,677h1v1h-1zM667,677h1v1h-1zM686,677h1v1h-1zM706,677h1v1h-1zM725,677h1v1h-1zM744,677h1v1h-1zM763,677h1v1h-1zM782,677h1v1h-1zM802,677h1v1h-1zM821,677h1v1h-1zM840,677h1v1h-1zM859,677h1v1h-1zM878,677h1v1h-1zM898,677h1v1h-1zM14,696h1v1h-1zM34,696h1v1h-1zM53,696h1v1h-1zM72,696h1v1h-1zM91,696h1v1h-1zM110,696h1v1h-1zM130,696h1v1h-1zM149,696h1v1h-1zM168,696h1v1h-1zM187,696h1v1h-1zM206,696h1v1h-1zM226,696h1v1h-1zM245,696h1v1h-1zM264,696h1v1h-1zM283,696h1v1h-1zM302,696h1v1h-1zM322,696h1v1h-1zM341,696h1v1h-1zM360,696h1v1h-1zM379,696h1v1h-1zM398,696h1v1h-1zM418,696h1v1h-1zM437,696h1v1h-1zM456,696h1v1h-1zM475,696h1v1h-1zM494,696h1v1h-1zM514,696h1v1h-1zM533,696h1v1h-1zM552,696h1v1h-1zM571,696h1v1h-1zM590,696h1v1h-1zM610,696h1v1h-1zM629,696h1v1h-1zM648,696h1v1h-1zM667,696h1v1h-1zM686,696h1v1h-1zM706,696h1v1h-1zM725,696h1v1h-1zM744,696h1v1h-1zM763,696h1v1h-1zM782,696h1v1h-1zM802,696h1v1h-1zM821,696h1v1h-1zM840,696h1v1h-1zM859,696h1v1h-1zM878,696h1v1h-1zM898,696h1v1h-1z" fill="#c6c6c6"/><path d="M14,43h1v1h-1zM34,43h1v1h-1zM53,43h1v1h-1zM72,43h1v1h-1zM91,43h1v1h-1zM110,43h1v1h-1zM130,43h1v1h-1zM149,43h1v1h-1zM168,43h1v1h-1zM187,43h1v1h-1zM206,43h1v1h-1zM226,43h1v1h-1zM245,43h1v1h-1zM264,43h1v1h-1zM283,43h1v1h-1zM302,43h1v1h-1zM322,43h1v1h-1zM14,63h1v1h-1zM34,63h1v1h-1zM53,63h1v1h-1zM72,63h1v1h-1zM91,63h1v1h-1zM110,63h1v1h-1zM130,63h1v1h-1zM149,63h1v1h-1zM168,63h1v1h-1zM187,63h1v1h-1zM206,63h1v1h-1zM226,63h1v1h-1zM245,63h1v1h-1zM264,63h1v1h-1zM283,63h1v1h-1zM302,63h1v1h-1zM322,63h1v1h-1zM14,82h1v1h-1zM34,82h1v1h-1zM53,82h1v1h-1zM72,82h1v1h-1zM91,82h1v1h-1zM110,82h1v1h-1zM130,82h1v1h-1zM149,82h1v1h-1zM168,82h1v1h-1zM187,82h1v1h-1zM206,82h1v1h-1zM226,82h1v1h-1zM245,82h1v1h-1zM264,82h1v1h-1zM283,82h1v1h-1zM302,82h1v1h-1zM322,82h1v1h-1z" fill="#9a9a9a"/></svg>
<div class="a" style="left:24px;top:46px;width:694px;height:647px;background:#f0f0f0;border:1px solid #a8a8a8;border-left-color:#f2f0f2;border-bottom-color:#d8d8d8;border-right-color:#d8d8d8;box-shadow:0 0 9px rgba(0,0,0,0.33)"></div>
<div class="a" style="left:25px;top:47px;width:692px;height:30px;background:#fff"></div>
<div class="t" style="left:32.5px;top:54.5px;font-size:12px;line-height:14px;color:#9a9a9a;--w:50px;">ワードランプ</div>
<div class="a" style="left:33px;top:86px;width:159px;height:40px;background:#5068c8;border-radius:7px 7px 0 0"></div>
<div class="a" style="left:196px;top:86px;width:225px;height:40px;background:#8a9ee4;border-radius:7px 7px 0 0"></div>
<div class="t" style="left:86.5px;top:90.6px;font-size:12px;line-height:14px;color:#fff;font-weight:bold;--w:52px;-webkit-text-stroke:0.35px #fff;">基本設定</div>
<div class="t" style="left:282.7px;top:90.6px;font-size:12px;line-height:14px;color:#fff;font-weight:bold;--w:51.3px;-webkit-text-stroke:0.35px #fff;">詳細設定</div>
<svg style="left:0;top:0" width="720" height="130"><path d="M39.5,124.5 L46.5,108.5 Q47.5,106.5 50.0,106.5 L136.5,106.5 Q141.5,106.5 141.5,111.5 L141.5,124.5" fill="#f5c000" stroke="#1a1a1a" stroke-width="1"/><path d="M141.5,124.5 L148.5,108.5 Q149.5,106.5 152.0,106.5 L181.5,106.5 Q186.5,106.5 186.5,111.5 L186.5,124.5" fill="#eeeef5" stroke="#1a1a1a" stroke-width="1"/><path d="M202.5,124.5 L209.5,108.5 Q210.5,106.5 213.0,106.5 L261.5,106.5 Q266.5,106.5 266.5,111.5 L266.5,124.5" fill="#eeeef5" stroke="#1a1a1a" stroke-width="1"/><path d="M266.5,124.5 L273.5,108.5 Q274.5,106.5 277.0,106.5 L323.5,106.5 Q328.5,106.5 328.5,111.5 L328.5,124.5" fill="#eeeef5" stroke="#1a1a1a" stroke-width="1"/><path d="M328.5,124.5 L335.5,108.5 Q336.5,106.5 339.0,106.5 L407.5,106.5 Q412.5,106.5 412.5,111.5 L412.5,124.5" fill="#eeeef5" stroke="#1a1a1a" stroke-width="1"/></svg>
<div class="t" style="left:48.7px;top:109.3px;font-size:12px;line-height:14px;--w:85.8px;">デバイス/スタイル*</div>
<div class="t" style="left:149px;top:109.3px;font-size:12px;line-height:14px;--w:30.7px;">文字*</div>
<div class="t" style="left:212px;top:109.5px;font-size:12px;line-height:14px;--w:47.2px;">拡張機能</div>
<div class="t" style="left:273.3px;top:109.5px;font-size:12px;line-height:14px;--w:48.1px;">表示条件</div>
<div class="t" style="left:335.5px;top:109.5px;font-size:12px;line-height:14px;--w:70.2px;">演算/スクリプト</div>
<div class="a" style="left:30px;top:123.5px;width:687px;height:4px;background:#f5c000"></div>
<div class="a" style="left:30px;top:127.5px;width:687px;height:530.5px;border-left:1px solid #a0a0a0;border-right:2px solid #7c7c7c;border-bottom:2px solid #7c7c7c;background:#f0f0f0"></div>
<div class="t" style="left:65.5px;top:139.3px;font-size:12px;line-height:14px;--w:72.3px;">ランプ種類(T):</div>
<div class="a" style="left:164.5px;top:140.5px;width:13px;height:13px;border:1px solid #333;border-radius:50%;background:#fff"></div>
<div class="t" style="left:181px;top:140.0px;font-size:12px;line-height:14px;--w:22px;">ビット</div>
<div class="a" style="left:300.0px;top:140.5px;width:13px;height:13px;border:1px solid #333;border-radius:50%;background:#fff"></div>
<div class="a" style="left:303.0px;top:143.5px;width:7px;height:7px;border-radius:50%;background:#1a1a1a"></div>
<div class="t" style="left:315.3px;top:140.0px;font-size:12px;line-height:14px;--w:28px;">ワード</div>
<div class="t" style="left:65.5px;top:165.0px;font-size:12px;line-height:14px;--w:60.2px;">デバイス(D):</div>
<div class="a" style="left:165px;top:161px;width:247px;height:24px;background:#fff;border-top:1px solid #a0a0a0;border-left:1px solid #a0a0a0"></div>
<div class="t" style="left:168.4px;top:165.3px;font-size:12px;line-height:14px;--w:26.6px;">ZR11</div>
<svg style="left:397px;top:170px" width="12" height="8"><path d="M0,0 L10,0 L5,5 Z" fill="#b4b4b4"/></svg>
<div class="a" style="left:420px;top:162px;width:28px;height:21px;background:#e1e1e1;border:1px solid #adadad"></div>
<svg style="left:428px;top:175px" width="14" height="4"><rect x="0.5" y="0.5" width="2" height="2" fill="#000"/><rect x="4.8" y="0.5" width="2" height="2" fill="#000"/><rect x="9" y="0.5" width="2" height="2" fill="#000"/></svg>
<div class="t" style="left:453.6px;top:164.9px;font-size:12px;line-height:14px;--w:73.4px;">データ形式(A):</div>
<div class="a" style="left:535px;top:161.3px;width:60px;height:21.5px;background:#e5e5e5;border:1px solid #adadad"></div>
<div class="t" style="left:538.7px;top:165.0px;font-size:12px;line-height:14px;--w:48px;">符号付き</div>
<div class="a" style="left:55px;top:189px;width:540px;height:1px;background:#a0a0a0"></div>
<div class="a" style="left:55px;top:190px;width:540px;height:1px;background:#fff"></div>
<div class="t" style="left:52px;top:201.9px;font-size:12px;line-height:14px;--w:40px;">条件数:</div>
<div class="t" style="left:162.7px;top:201.9px;font-size:12px;line-height:14px;--w:6.5px;">4</div>
<div class="a" style="left:51px;top:223px;width:44px;height:23px;background:#cce4f7;border:1px solid #0078d7"></div>
<div class="t" style="left:61.5px;top:227.5px;font-size:12px;line-height:14px;--w:23px;">範囲</div>
<div class="a" style="left:96.5px;top:223px;width:37.5px;height:23px;background:#e1e1e1;border:1px solid #adadad"></div>
<div class="t" style="left:103.75px;top:227.5px;font-size:12px;line-height:14px;--w:23px;">文字</div>
<div class="a" style="left:137px;top:223px;width:30px;height:23px;background:#d6d6d6;border:1px solid #c6c6c6"></div>
<div class="a" style="left:168.3px;top:223px;width:29.399999999999977px;height:23px;background:#d6d6d6;border:1px solid #c6c6c6"></div>
<div class="a" style="left:200px;top:223px;width:29.5px;height:23px;background:#d6d6d6;border:1px solid #c6c6c6"></div>
<div class="a" style="left:231.2px;top:223px;width:29.400000000000034px;height:23px;background:#d6d6d6;border:1px solid #c6c6c6"></div>
<svg style="left:0;top:0" width="270" height="250">
<path d="M150,227.8 h4 a1,1 0 0 1 1,1 v4.7 h4.3 a1,1 0 0 1 1,1 v3.6 a1,1 0 0 1 -1,1 h-4.3 v4.7 a1,1 0 0 1 -1,1 h-4 a1,1 0 0 1 -1,-1 v-4.7 h-4.3 a1,1 0 0 1 -1,-1 v-3.6 a1,1 0 0 1 1,-1 h4.3 v-4.7 a1,1 0 0 1 1,-1 z" fill="#f9c41c" stroke="#e39b00" stroke-width="1"/>
<path d="M175.5,228 L190.5,240.5 M190.5,228 L175.5,240.5" stroke="#8e8e8e" stroke-width="3"/>
<path d="M214.2,227.5 L220.7,234 L217,234 L217,241 L211.5,241 L211.5,234 L207.8,234 Z" fill="#8e8e8e"/>
<path d="M245.8,241 L252.3,234.5 L248.6,234.5 L248.6,227.5 L243.1,227.5 L243.1,234.5 L239.4,234.5 Z" fill="#8e8e8e"/>
</svg>
<div class="a" style="left:51px;top:248px;width:208px;height:303px;background:#f0f0f0;border-top:2px solid #7a7a7a;border-left:2px solid #7a7a7a;border-right:1px solid #e3e3e3;border-bottom:1px solid #e3e3e3"></div>
<div class="a" style="left:84px;top:250px;width:1px;height:301px;background:#a0a0a0"></div>
<div class="a" style="left:85px;top:250px;width:155px;height:16px;background:#0078d7"></div>
<div class="t" style="left:151px;top:251.6px;font-size:12px;line-height:14px;color:#fff;--w:22.8px;">通常</div>
<div class="a" style="left:85px;top:266px;width:155px;height:1px;background:#fff"></div>
<div class="a" style="left:85px;top:267px;width:155px;height:75px;background:#0078d7"></div>
<div class="a" style="left:130px;top:272px;width:65px;height:65px;background:#000"></div>
<div class="a" style="left:130px;top:272px;width:65px;height:65px;background:#008000;border-radius:50%"></div>
<div class="t" style="left:64.5px;top:290.0px;font-size:12px;line-height:14px;--w:6.5px;">0</div>
<div class="a" style="left:52px;top:342px;width:32px;height:1px;background:#a0a0a0"></div>
<div class="a" style="left:52px;top:435px;width:32px;height:1px;background:#a0a0a0"></div>
<div class="a" style="left:52px;top:528px;width:32px;height:1px;background:#a0a0a0"></div>
<div class="a" style="left:85px;top:342px;width:155px;height:18px;background:#fff;border-bottom:1px solid #e4e4e4"></div>
<div class="t" style="left:139.2px;top:344.3px;font-size:12px;line-height:14px;--w:46.8px;">$V == 1</div>
<div class="a" style="left:85px;top:436px;width:155px;height:17px;background:#fff;border-bottom:1px solid #e4e4e4"></div>
<div class="t" style="left:139.2px;top:437.8px;font-size:12px;line-height:14px;--w:46.8px;">$V == 2</div>
<div class="a" style="left:85px;top:529px;width:155px;height:17px;background:#fff;border-bottom:1px solid #e4e4e4"></div>
<div class="t" style="left:139.2px;top:530.8px;font-size:12px;line-height:14px;--w:46.8px;">$V == 9</div>
<div class="a" style="left:85px;top:360px;width:155px;height:76px;background:#fff;border-bottom:1px solid #e4e4e4"></div>
<div class="a" style="left:85px;top:453px;width:155px;height:76px;background:#fff;border-bottom:1px solid #e4e4e4"></div>
<div class="a" style="left:85px;top:546px;width:155px;height:5px;background:#fff"></div>
<div class="a" style="left:130px;top:365px;width:65px;height:65px;background:#000"></div>
<div class="a" style="left:130px;top:365px;width:65px;height:65px;border:1px solid #008000;border-radius:50%"></div>
<div class="a" style="left:130px;top:458px;width:65px;height:65px;background:#000"></div>
<div class="a" style="left:130px;top:458px;width:65px;height:65px;background:#fff;border:1px solid #008000;border-radius:50%"></div>
<div class="t" style="left:65.8px;top:382.8px;font-size:12px;line-height:14px;--w:5px;">1</div>
<div class="t" style="left:65.5px;top:475.5px;font-size:12px;line-height:14px;--w:6.5px;">2</div>
<div class="t" style="left:65.5px;top:533.0px;font-size:12px;line-height:14px;--w:6.5px;">3</div>
<div class="a" style="left:240px;top:250px;width:18px;height:301px;background:#f0f0f0"></div>
<div class="a" style="left:242.3px;top:267.4px;width:14.7px;height:214.5px;background:#cdcdcd"></div>
<svg style="left:240px;top:250px" width="18" height="301">
<path d="M5.5,11 L9.2,7.3 L12.9,11" fill="none" stroke="#606060" stroke-width="1.6"/>
<path d="M5.5,290 L9.2,293.7 L12.9,290" fill="none" stroke="#606060" stroke-width="1.6"/>
</svg>
<div class="t" style="left:274px;top:319.7px;font-size:12px;line-height:14px;--w:44.5px;">図形(P):</div>
<div class="a" style="left:333px;top:316.4px;width:260px;height:21.2px;background:#e5e5e5;border:1px solid #adadad"></div>
<div class="t" style="left:336.6px;top:320.0px;font-size:12px;line-height:14px;--w:77.2px;">円形：Circle_1</div>
<div class="a" style="left:274.5px;top:383.5px;width:423px;height:167px;border:1px solid #dcdcdc"></div>
<div class="a" style="left:280px;top:376px;width:54px;height:15px;background:#f0f0f0"></div>
<div class="t" style="left:283px;top:377.0px;font-size:12px;line-height:14px;--w:47.2px;">図形属性</div>
<div class="t" style="left:289.9px;top:401.6px;font-size:12px;line-height:14px;--w:46.6px;">枠色(M):</div>
<div class="t" style="left:289.9px;top:427.3px;font-size:12px;line-height:14px;--w:56.4px;">図形色(S):</div>
<div class="t" style="left:289.9px;top:452.8px;font-size:12px;line-height:14px;--w:58px;">パターン(E):</div>
<div class="t" style="left:289.9px;top:477.9px;font-size:12px;line-height:14px;--w:56.4px;">背景色(B):</div>
<div class="a" style="left:427.2px;top:398.1px;width:69.6px;height:22.6px;background:#008000;border:1px solid #222"></div>
<div class="a" style="left:427.2px;top:424.3px;width:69.6px;height:22.3px;background:#008000;border:1px solid #222"></div>
<div class="a" style="left:428.2px;top:449.3px;width:67.6px;height:22px;background:#e1e1e1;border:1px solid #c6c6c6"></div>
<div class="a" style="left:445.2px;top:453px;width:32.8px;height:14.7px;background:#f0f0f0"></div>
<div class="a" style="left:446.6px;top:454.6px;width:12.6px;height:11px;border:1px solid #333;background:#fff"></div>
<div class="t" style="left:464.8px;top:453.2px;font-size:12px;line-height:14px;--w:7.2px;">8</div>
<div class="a" style="left:427.2px;top:474.8px;width:69.6px;height:23px;background:#000;border:1px solid #222"></div>
<div class="a" style="left:498.3px;top:398.1px;width:13.5px;height:22.599999999999966px;background:#e1e1e1;border:1px solid #c6c6c6"></div>
<svg style="left:501.5px;top:406.9px" width="8" height="5"><path d="M0,0 L7,0 L3.5,4 Z" fill="#000"/></svg>
<div class="a" style="left:498.3px;top:424.3px;width:13.5px;height:22.30000000000001px;background:#e1e1e1;border:1px solid #c6c6c6"></div>
<svg style="left:501.5px;top:433.0px" width="8" height="5"><path d="M0,0 L7,0 L3.5,4 Z" fill="#000"/></svg>
<div class="a" style="left:498.3px;top:449.3px;width:13.5px;height:22.0px;background:#e1e1e1;border:1px solid #c6c6c6"></div>
<svg style="left:501.5px;top:457.8px" width="8" height="5"><path d="M0,0 L7,0 L3.5,4 Z" fill="#000"/></svg>
<div class="a" style="left:498.3px;top:474.8px;width:13.5px;height:23.0px;background:#e1e1e1;border:1px solid #c6c6c6"></div>
<svg style="left:501.5px;top:483.8px" width="8" height="5"><path d="M0,0 L7,0 L3.5,4 Z" fill="#000"/></svg>
<div class="a" style="left:158.2px;top:564px;width:102.40000000000003px;height:22.600000000000023px;background:#e1e1e1;border:1px solid #adadad"></div>
<div class="t" style="left:185.6px;top:568.3px;font-size:12px;line-height:14px;--w:47.6px;">条件流用</div>
<div class="a" style="left:590.3px;top:564.3px;width:107.40000000000009px;height:22.300000000000068px;background:#e1e1e1;border:1px solid #adadad"></div>
<div class="t" style="left:604.5px;top:568.5px;font-size:12px;line-height:14px;--w:79px;">文字設定へ &gt;&gt;</div>
<div class="t" style="left:33.8px;top:667.3px;font-size:12px;line-height:14px;--w:28px;">名称:</div>
<div class="a" style="left:112px;top:662.7px;width:192.8px;height:25px;background:#fff;border:1px solid #7a7a7a"></div>
<div class="a" style="left:308.7px;top:664.5px;width:121.80000000000001px;height:22.100000000000023px;background:#e1e1e1;border:1px solid #adadad"></div>
<div class="t" style="left:329.20000000000005px;top:668.5px;font-size:12px;line-height:14px;--w:80.8px;">スイッチへ変換...</div>
<div class="a" style="left:534.3px;top:664.3px;width:85.30000000000007px;height:22.200000000000045px;background:#e1e1e1;border:1px solid #adadad"></div>
<div class="t" style="left:569.35px;top:668.4px;font-size:12px;line-height:14px;--w:15.2px;">OK</div>
<div class="a" style="left:626px;top:664.3px;width:85.70000000000005px;height:22.200000000000045px;background:#e1e1e1;border:1px solid #adadad"></div>
<div class="t" style="left:645.75px;top:668.4px;font-size:12px;line-height:14px;--w:46.2px;">キャンセル</div>
<div class="a" style="left:579px;top:41px;width:597px;height:487px;background:#f0f0f0;border:1px solid #484848;box-shadow:0 3px 16px rgba(0,0,0,0.45)"></div>
<div class="a" style="left:580px;top:42px;width:595px;height:30px;background:#fff"></div>
<div class="t" style="left:588.7px;top:49.5px;font-size:12px;line-height:14px;--w:58px;">イメージ一覧</div>
<svg style="left:1154px;top:50.5px" width="12" height="12"><path d="M0.5,0.5 L10.5,10.5 M10.5,0.5 L0.5,10.5" stroke="#111" stroke-width="1.1"/></svg>
<div class="t" style="left:591.7px;top:91.8px;font-size:12px;line-height:14px;--w:51.5px;">表示図形:</div>
<div class="a" style="left:593px;top:115px;width:150px;height:366px;background:#ababab;border-top:1px solid #828282;border-left:1px solid #828282;border-right:1px solid #dadada;border-bottom:1px solid #dadada"></div>
<div class="a" style="left:594px;top:116px;width:48px;height:70px;background:#f0f0f0;border-bottom:1px solid #a0a0a0"></div>
<div class="a" style="left:642px;top:116px;width:100px;height:70px;background:#000;border-left:1px solid #a0a0a0;border-bottom:1px solid #c8c8c8"></div>
<div class="t" style="left:597px;top:144.5px;font-size:12px;line-height:14px;--w:6.5px;">0</div>
<div class="a" style="left:594px;top:186px;width:48px;height:70px;background:#f0f0f0;border-bottom:1px solid #a0a0a0"></div>
<div class="a" style="left:642px;top:186px;width:100px;height:70px;background:#000;border-left:1px solid #a0a0a0;border-bottom:1px solid #c8c8c8"></div>
<div class="t" style="left:597px;top:214.5px;font-size:12px;line-height:14px;--w:6.5px;">1</div>
<div class="a" style="left:594px;top:256px;width:48px;height:70px;background:#f0f0f0;border-bottom:1px solid #a0a0a0"></div>
<div class="a" style="left:642px;top:256px;width:100px;height:70px;background:#000;border-left:1px solid #a0a0a0;border-bottom:1px solid #c8c8c8"></div>
<div class="t" style="left:597px;top:284.5px;font-size:12px;line-height:14px;--w:6.5px;">2</div>
<div class="a" style="left:594px;top:326px;width:48px;height:70px;background:#f0f0f0;border-bottom:1px solid #a0a0a0"></div>
<div class="a" style="left:642px;top:326px;width:100px;height:70px;background:#000;border-left:1px solid #a0a0a0;border-bottom:1px solid #c8c8c8"></div>
<div class="t" style="left:597px;top:354.5px;font-size:12px;line-height:14px;--w:6.5px;">3</div>
<div class="a" style="left:643px;top:116px;width:99px;height:69px;background:#0078d7"></div>
<div class="a" style="left:660px;top:118px;width:64px;height:64px;background:#000"></div>
<div class="a" style="left:760.0px;top:93.5px;width:13px;height:13px;border:1px solid #333;border-radius:50%;background:#fff"></div>
<div class="a" style="left:763.0px;top:96.5px;width:7px;height:7px;border-radius:50%;background:#1a1a1a"></div>
<div class="t" style="left:775.4px;top:93.0px;font-size:12px;line-height:14px;--w:65.6px;">基本図形(B)</div>
<div class="a" style="left:892.9px;top:93.5px;width:13px;height:13px;border:1px solid #333;border-radius:50%;background:#fff"></div>
<div class="t" style="left:908.4px;top:93.0px;font-size:12px;line-height:14px;--w:57px;">ライブラリ(L)</div>
<div class="a" style="left:998.1px;top:93.5px;width:13px;height:13px;border:1px solid #333;border-radius:50%;background:#fff"></div>
<div class="t" style="left:1013.5px;top:93.0px;font-size:12px;line-height:14px;--w:41px;">部品(P)</div>
<div class="a" style="left:818.2px;top:114.2px;width:235.5px;height:22.5px;background:#fff;border:1px solid #7a7a7a"></div>
<div class="t" style="left:822.8px;top:119.8px;font-size:12px;line-height:14px;--w:41.7px;">46 円形</div>
<svg style="left:1039.5px;top:122px" width="12" height="8"><path d="M1,1.5 L5.2,5.7 L9.4,1.5" fill="none" stroke="#333" stroke-width="1.1"/></svg>
<div class="a" style="left:762px;top:149.5px;width:13px;height:12.5px;border:1px solid #c8c8c8;background:#f0f0f0"></div>
<svg style="left:762px;top:149.5px" width="13" height="13"><path d="M2.5,6.5 L5,9 L10.5,3.5" fill="none" stroke="#b4b4b4" stroke-width="1.3"/></svg>
<div class="t" style="left:778.1px;top:148.4px;font-size:12px;line-height:14px;color:#707070;--w:138.3px;">全条件を同時に設定する(T)</div>
<div class="a" style="left:755.5px;top:167px;width:399.5px;height:311.5px;background:#000;border:2px solid #6b6b60;border-right-color:#9c9c94;border-bottom-color:#9c9c94"></div>
<div class="a" style="left:1135px;top:169px;width:18px;height:307.5px;background:#f0f0f0"></div>
<div class="a" style="left:1136px;top:185px;width:16px;height:16.5px;background:#cdcdcd"></div>
<svg style="left:1135px;top:169px" width="18" height="308">
<path d="M5.2,11 L9,7.2 L12.8,11" fill="none" stroke="#606060" stroke-width="1.6"/>
<path d="M5.2,297 L9,300.8 L12.8,297" fill="none" stroke="#606060" stroke-width="1.6"/>
</svg>
<div class="a" style="left:761px;top:172px;width:74px;height:74px;border:2px solid #00ffff"></div>
<svg style="left:0;top:0" width="1196" height="714"><circle cx="691.5" cy="150.0" r="22.2" fill="#40bfff"/><circle cx="691.5" cy="220.0" r="22.2" fill="#40bfff"/><circle cx="691.5" cy="290.0" r="22.2" fill="#40bfff"/><circle cx="691.5" cy="360.0" r="22.2" fill="#40bfff"/><circle cx="797.5" cy="208.5" r="22.2" fill="#40bfff"/><circle cx="877.5" cy="208.5" r="22.2" fill="#40bfff"/><circle cx="877.5" cy="208.5" r="19.3" fill="none" stroke="#0a2a40" stroke-width="1"/><circle cx="957.5" cy="208.5" r="22.2" fill="#40bfff"/><circle cx="957.5" cy="208.5" r="19.3" fill="none" stroke="#0a2a40" stroke-width="1"/><path d="M965.5,194.5 A16,16 0 0 1 970.5,200.5" fill="none" stroke="#fff" stroke-width="1.6"/><circle cx="1037.5" cy="208.5" r="22.2" fill="#40bfff"/><path d="M1023.9,222.1 A19.3,19.3 0 0 1 1051.1,194.9" fill="none" stroke="#fff" stroke-width="1"/><path d="M1051.1,194.9 A19.3,19.3 0 0 1 1023.9,222.1" fill="none" stroke="#7a7a7a" stroke-width="1"/><circle cx="797.5" cy="294.5" r="22.2" fill="#40bfff"/><path d="M783.9,308.1 A19.3,19.3 0 0 1 811.1,280.9" fill="none" stroke="#7a7a7a" stroke-width="1"/><path d="M811.1,280.9 A19.3,19.3 0 0 1 783.9,308.1" fill="none" stroke="#fff" stroke-width="1"/><circle cx="877.5" cy="294.5" r="22.2" fill="#c0c0c0"/><circle cx="877.5" cy="294.5" r="19" fill="#40bfff"/><circle cx="877.5" cy="294.5" r="19" fill="#40bfff" stroke="#000" stroke-width="1"/><circle cx="957.5" cy="294.5" r="22.2" fill="#c0c0c0"/><circle cx="957.5" cy="294.5" r="19" fill="#40bfff"/><path d="M965.5,280.5 A16,16 0 0 1 970.5,286.5" fill="none" stroke="#fff" stroke-width="1.6"/><circle cx="957.5" cy="294.5" r="19" fill="#40bfff" stroke="#000" stroke-width="1"/><circle cx="1037.5" cy="294.5" r="22.2" fill="#c0c0c0"/><circle cx="1037.5" cy="294.5" r="19" fill="#40bfff"/><circle cx="1037.5" cy="294.5" r="19" fill="#40bfff" stroke="#000" stroke-width="1"/><path d="M1025.5,306.5 A17,17 0 0 1 1049.5,282.5" fill="none" stroke="#fff" stroke-width="1"/><circle cx="797.5" cy="380.5" r="22.2" fill="#c0c0c0"/><circle cx="797.5" cy="380.5" r="19" fill="#40bfff"/><circle cx="797.5" cy="380.5" r="19" fill="#40bfff" stroke="#000" stroke-width="1"/><circle cx="797.5" cy="380.5" r="16.5" fill="none" stroke="#fff" stroke-width="1"/><circle cx="797.5" cy="380.5" r="15" fill="none" stroke="#000" stroke-width="1"/><rect x="855.0" y="358.0" width="45" height="45" fill="#c0c0c0"/><circle cx="877.5" cy="380.5" r="18" fill="#40bfff" stroke="#000" stroke-width="1"/><rect x="935.0" y="358.0" width="45" height="45" fill="#c0c0c0"/><circle cx="957.5" cy="380.5" r="18" fill="#40bfff" stroke="#000" stroke-width="1"/><circle cx="957.5" cy="380.5" r="15.5" fill="none" stroke="#000" stroke-width="1"/><rect x="1015.0" y="358.0" width="45" height="45" fill="#c0c0c0"/><circle cx="1037.5" cy="380.5" r="18" fill="#40bfff" stroke="#000" stroke-width="1"/><circle cx="1037.5" cy="380.5" r="15.5" fill="none" stroke="#000" stroke-width="1"/><path d="M1045.5,368.5 A14,14 0 0 1 1049.5,373.5" fill="none" stroke="#fff" stroke-width="1.5"/></svg>
<div class="t" style="left:764px;top:245.5px;font-size:11px;line-height:13px;color:#fff;--w:48.5px;">1 Circle_1</div>
<div class="t" style="left:844px;top:245.5px;font-size:11px;line-height:13px;color:#fff;--w:48.5px;">2 Circle_2</div>
<div class="t" style="left:924px;top:245.5px;font-size:11px;line-height:13px;color:#fff;--w:48.5px;">3 Circle_3</div>
<div class="t" style="left:1004px;top:245.5px;font-size:11px;line-height:13px;color:#fff;--w:48.5px;">4 Circle_4</div>
<div class="t" style="left:764px;top:331.5px;font-size:11px;line-height:13px;color:#fff;--w:48.5px;">5 Circle_5</div>
<div class="t" style="left:844px;top:331.5px;font-size:11px;line-height:13px;color:#fff;--w:48.5px;">6 Circle_6</div>
<div class="t" style="left:924px;top:331.5px;font-size:11px;line-height:13px;color:#fff;--w:48.5px;">7 Circle_7</div>
<div class="t" style="left:1004px;top:331.5px;font-size:11px;line-height:13px;color:#fff;--w:48.5px;">8 Circle_8</div>
<div class="t" style="left:764px;top:417.5px;font-size:11px;line-height:13px;color:#fff;--w:48.5px;">9 Circle_9</div>
<div class="t" style="left:844px;top:417.5px;font-size:11px;line-height:13px;color:#fff;--w:60.4px;">10 Circle_10</div>
<div class="t" style="left:924px;top:417.5px;font-size:11px;line-height:13px;color:#fff;--w:60.4px;">11 Circle_11</div>
<div class="t" style="left:1004px;top:417.5px;font-size:11px;line-height:13px;color:#fff;--w:60.4px;">12 Circle_12</div>
<div class="a" style="left:762px;top:487px;width:76.6px;height:25.7px;background:#fff;border:1px solid #a0a0a0"></div>
<div class="t" style="left:768.3px;top:490.6px;font-size:12px;line-height:14px;--w:6px;">1</div>
<div class="a" style="left:821.7px;top:488.5px;width:15px;height:11.5px;background:#e8e8e8;border:1px solid #b4b4b4"></div>
<div class="a" style="left:821.7px;top:500px;width:15px;height:11.5px;background:#e8e8e8;border:1px solid #b4b4b4"></div>
<svg style="left:825.7px;top:491px" width="8" height="18"><path d="M0,5 L7,5 L3.5,1.5 Z M0,13 L7,13 L3.5,16.5 Z" fill="#222"/></svg>
<div class="a" style="left:868px;top:490.5px;width:85.39999999999998px;height:21.799999999999955px;background:#e1e1e1;border:1px solid #adadad"></div>
<div class="t" style="left:884.9000000000001px;top:494.4px;font-size:12px;line-height:14px;--w:51.6px;">ジャンプ(J)</div>
<div class="a" style="left:984.3px;top:490.5px;width:85.0px;height:21.799999999999955px;background:#e1e1e1;border:2px solid #0078d7"></div>
<div class="t" style="left:1018.6999999999999px;top:494.4px;font-size:12px;line-height:14px;--w:16.2px;">OK</div>
<div class="a" style="left:1078px;top:490.5px;width:85.40000000000009px;height:21.799999999999955px;background:#e1e1e1;border:1px solid #adadad"></div>
<div class="t" style="left:1097.3500000000001px;top:494.4px;font-size:12px;line-height:14px;--w:46.7px;">キャンセル</div>
<script>
document.querySelectorAll('.t').forEach(function(e){var w=parseFloat(e.style.getPropertyValue('--w'));if(w){var r=e.getBoundingClientRect().width;if(r>0){e.style.transform='scaleX('+(w/r)+')';}}});
</script>
</body></html>
